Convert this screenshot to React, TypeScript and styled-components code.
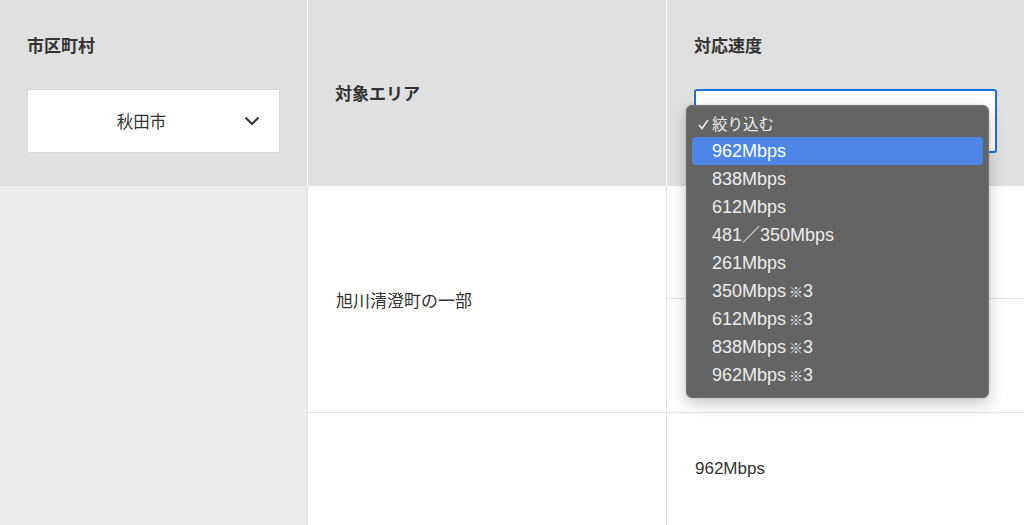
import styled, { createGlobalStyle } from 'styled-components';

const GlobalStyle = createGlobalStyle`
  html, body {
    margin: 0;
    padding: 0;
    background: #ffffff;
  }
  body {
    font-family: "Liberation Sans", "Noto Sans CJK JP", sans-serif;
    color: #333333;
  }
`;

const Page = styled.div`
  width: 1024px;
  height: 525px;
  overflow: hidden;
  display: flex;
  flex-direction: column;
`;

const HeadRow = styled.div`
  display: grid;
  grid-template-columns: 307px 358px 1fr;
  column-gap: 1px;
  background: #ffffff;
  height: 186px;
`;

const HeadCell = styled.div<{ $center?: boolean }>`
  background: #e0e0e0;
  padding: ${(p) => (p.$center ? '0 27px' : '34px 27px 33px 27px')};
  display: flex;
  flex-direction: column;
  justify-content: ${(p) => (p.$center ? 'center' : 'flex-start')};
  position: relative;
`;

const HeadTitle = styled.div`
  font-family: "Noto Sans CJK JP", sans-serif;
  font-weight: 700;
  font-size: 17px;
  line-height: 22px;
  color: #333333;
`;

const SelectBox = styled.div<{ $focused?: boolean }>`
  margin-top: 33px;
  height: 64px;
  box-sizing: border-box;
  background: #ffffff;
  border: ${(p) => (p.$focused ? '2px solid #1b6fdf' : '1px solid #d8d8d8')};
  border-radius: ${(p) => (p.$focused ? '3px' : '0')};
  display: flex;
  align-items: center;
  position: relative;
`;

const SelectValue = styled.span`
  flex: 1;
  text-align: center;
  padding-right: 24px;
  font-family: "Noto Sans CJK JP", sans-serif;
  font-size: 16.5px;
  color: #333333;
`;

const Chevron = styled.svg`
  position: absolute;
  right: 19px;
  top: 50%;
  margin-top: -5px;
`;

const Body = styled.div`
  flex: 1;
  display: grid;
  grid-template-columns: 307px 358px 1fr;
  grid-template-rows: 112px 113px 1fr;
  gap: 1px;
  background: #e2e2e2;
`;

const SideCell = styled.div`
  grid-row: 1 / span 3;
  background: #ebebeb;
`;

const Cell = styled.div<{ $rows?: number }>`
  grid-row: span ${(p) => p.$rows ?? 1};
  background: #ffffff;
  display: flex;
  align-items: center;
  padding: 0 27px 0 28px;
  font-family: "Liberation Sans", "Noto Sans CJK JP", sans-serif;
  font-size: 17px;
  color: #333333;
`;

const CjkArea = styled.span`
  font-family: "Noto Sans CJK JP", sans-serif;
  font-size: 17px;
`;

const Menu = styled.div`
  position: absolute;
  left: -10px;
  top: 14px;
  width: 303px;
  box-sizing: border-box;
  padding: 3px 5px 8px 5px;
  background: #646464;
  border: 1px solid #727272;
  border-radius: 6px;
  box-shadow: 0 6px 16px rgba(0, 0, 0, 0.22), 0 0 2px rgba(0, 0, 0, 0.2);
  z-index: 10;
`;

const MenuItem = styled.div<{ $active?: boolean }>`
  height: 28px;
  line-height: 28px;
  display: flex;
  align-items: center;
  padding-left: 20px;
  position: relative;
  border-radius: 4px;
  background: ${(p) => (p.$active ? '#4d86e7' : 'transparent')};
  color: ${(p) => (p.$active ? '#ffffff' : '#ececec')};
  font-family: "Liberation Sans", "Noto Sans CJK JP", sans-serif;
  font-size: 18px;
`;

const Check = styled.svg`
  position: absolute;
  left: 6px;
  top: 10px;
`;

const CjkLabel = styled.span`
  font-family: "Noto Sans CJK JP", sans-serif;
  font-size: 15.5px;
`;

const Note = styled.span`
  font-family: "Noto Sans CJK JP", sans-serif;
  font-size: 14px;
  font-weight: 700;
  margin-left: 3px;
`;

const speeds: { label: string; note?: boolean }[] = [
  { label: '962Mbps' },
  { label: '838Mbps' },
  { label: '612Mbps' },
  { label: '481／350Mbps' },
  { label: '261Mbps' },
  { label: '350Mbps', note: true },
  { label: '612Mbps', note: true },
  { label: '838Mbps', note: true },
  { label: '962Mbps', note: true },
];

const App = () => {
  return (
    <Page>
      <GlobalStyle />
      <HeadRow>
        <HeadCell>
          <HeadTitle>市区町村</HeadTitle>
          <SelectBox>
            <SelectValue>秋田市</SelectValue>
            <Chevron width="16" height="10" viewBox="0 0 16 10">
              <path d="M1.5 1.5 L8 8 L14.5 1.5" fill="none" stroke="#333" strokeWidth="2" />
            </Chevron>
          </SelectBox>
        </HeadCell>
        <HeadCell $center>
          <HeadTitle>対象エリア</HeadTitle>
        </HeadCell>
        <HeadCell>
          <HeadTitle>対応速度</HeadTitle>
          <SelectBox $focused>
            <Menu>
              <MenuItem>
                <Check width="11" height="11" viewBox="0 0 11 11">
                  <path d="M1 6 L4 9.5 L10 1" fill="none" stroke="#ececec" strokeWidth="1.6" />
                </Check>
                <CjkLabel>絞り込む</CjkLabel>
              </MenuItem>
              {speeds.map((s, i) => (
                <MenuItem key={i} $active={i === 0}>
                  {s.label}
                  {s.note && (
                    <>
                      <Note>※</Note>3
                    </>
                  )}
                </MenuItem>
              ))}
            </Menu>
          </SelectBox>
        </HeadCell>
      </HeadRow>
      <Body>
        <SideCell />
        <Cell $rows={2}>
          <CjkArea>旭川清澄町の一部</CjkArea>
        </Cell>
        <Cell />
        <Cell />
        <Cell />
        <Cell>962Mbps</Cell>
      </Body>
    </Page>
  );
};

export default App;
